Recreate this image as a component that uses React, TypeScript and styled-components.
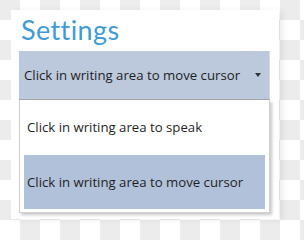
import React from 'react';
import styled, { createGlobalStyle } from 'styled-components';

// Fond en damier (transparence) autour du panneau
const GlobalStyle = createGlobalStyle`
  html, body {
    margin: 0;
    padding: 0;
  }
  body {
    width: 304px;
    height: 240px;
    overflow: hidden;
    background-color: #ffffff;
    background-image:
      linear-gradient(45deg, #ececec 25%, transparent 25%, transparent 75%, #ececec 75%),
      linear-gradient(45deg, #ececec 25%, transparent 25%, transparent 75%, #ececec 75%);
    background-size: 40px 40px;
    background-position: 20px 0, 0 20px;
    font-family: 'Open Sans', 'Liberation Sans', sans-serif;
  }
`;

const Panel = styled.div`
  margin: 10px 0 0 11px;
  width: 268px;
  height: 209px;
  box-sizing: border-box;
  background: #ffffff;
  box-shadow: 4px 1px 6px rgba(0, 0, 0, 0.07);
  padding: 2px 9px 0 8px;
  display: flex;
  flex-direction: column;
`;

const Title = styled.h1`
  margin: 0 0 0 2px;
  font-family: Lato, 'Open Sans', sans-serif;
  font-weight: 400;
  font-size: 27px;
  line-height: 36px;
  color: #3f9bd7;
  letter-spacing: 0.4px;
`;

const Dropdown = styled.div`
  position: relative;
  margin-top: 3px;
`;

const SelectBox = styled.div`
  height: 49px;
  box-sizing: border-box;
  background: #bcc8dc;
  border-bottom: 1px solid #a3a7ad;
  border-right: 1px solid #d6dde8;
  display: flex;
  align-items: center;
  padding: 0 6px 0 5px;
  color: #1f1f1f;
  font-size: 13.2px;
`;

const SelectText = styled.span`
  flex: 1;
  white-space: nowrap;
  overflow: hidden;
`;

const Arrow = styled.span`
  width: 0;
  height: 0;
  border-left: 3px solid transparent;
  border-right: 3px solid transparent;
  border-top: 4px solid #333;
  margin-right: 2px;
`;

const List = styled.ul`
  list-style: none;
  margin: 0;
  padding: 0 4px 3px;
  height: 113px;
  box-sizing: border-box;
  background: #ffffff;
  border: 1px solid #cfcfcf;
  border-top: none;
  box-shadow: 2px 2px 3px rgba(0, 0, 0, 0.22);
  display: flex;
  flex-direction: column;
`;

const Item = styled.li<{ $selected?: boolean }>`
  flex: 1;
  display: flex;
  align-items: center;
  padding-left: 3px;
  font-size: 13.2px;
  color: #1f1f1f;
  background: ${p => (p.$selected ? '#b1c1da' : 'transparent')};
`;

const options = [
  'Click in writing area to speak',
  'Click in writing area to move cursor',
];

export default function App() {
  const selected = 1;
  return (
    <>
      <GlobalStyle />
      <Panel>
        <Title>Settings</Title>
        <Dropdown>
          <SelectBox>
            <SelectText>{options[selected]}</SelectText>
            <Arrow />
          </SelectBox>
          <List>
            {options.map((o, i) => (
              <Item key={o} $selected={i === selected}>
                {o}
              </Item>
            ))}
          </List>
        </Dropdown>
      </Panel>
    </>
  );
}
